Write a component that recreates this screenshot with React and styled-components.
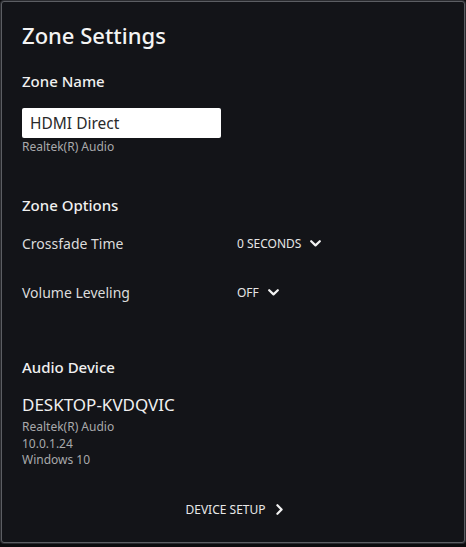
import React from "react";
import styled, { createGlobalStyle } from "styled-components";

const Global = createGlobalStyle`
  html, body { margin: 0; padding: 0; background: #0b0b0d; }
  body { font-family: "Noto Sans", "Open Sans", sans-serif; -webkit-font-smoothing: antialiased; }
  * { box-sizing: border-box; }
`;

const Backdrop = styled.div`
  width: 466px;
  height: 547px;
  padding: 1px 1px 4px 1px;
  background: #0b0b0d;
`;

const Dialog = styled.div`
  width: 464px;
  height: 542px;
  background: #131418;
  border: 1px solid #5c5e63;
  border-radius: 3px;
  box-shadow: 0 0 0 1px #2a2b2f;
  padding: 18px 20px 0 20px;
  display: flex;
  flex-direction: column;
  color: #ececec;
`;

const Title = styled.h1`
  margin: 0;
  font-size: 22px;
  line-height: 30px;
  font-weight: 500;
  color: #f4f4f4;
`;

const SectionTitle = styled.h2`
  margin: ${(p) => p.$top}px 0 0 0;
  font-size: 15px;
  line-height: 20px;
  font-weight: 500;
  color: #f0f0f0;
`;

const NameInput = styled.div`
  margin-top: 17px;
  width: 199px;
  height: 30px;
  background: #ffffff;
  border-radius: 2px;
  color: #2a2a2a;
  font-size: 15.5px;
  line-height: 30px;
  padding-left: 8px;
`;

const SubText = styled.div`
  font-size: 12px;
  line-height: ${(p) => p.$lh || 17}px;
  color: #a8a9ab;
`;

const OptionRow = styled.div`
  display: grid;
  grid-template-columns: 215px auto;
  align-items: center;
  margin-top: ${(p) => p.$top}px;
  height: 20px;
`;

const OptionLabel = styled.span`
  font-size: 14px;
  color: #dcdcdc;
`;

const OptionValue = styled.span`
  display: inline-flex;
  align-items: center;
  gap: 9px;
  font-size: 12px;
  color: #e6e6e6;
`;

const DeviceName = styled.div`
  margin-top: 16px;
  margin-bottom: 2px;
  font-size: 17px;
  line-height: 24px;
  color: #f0f0f0;
`;

const SetupButton = styled.div`
  margin-top: 33px;
  align-self: center;
  display: inline-flex;
  align-items: center;
  gap: 10px;
  font-size: 12px;
  line-height: 16px;
  color: #e8e8e8;
  padding-left: 2px;
`;

const ChevronDown = () => (
  <svg width="11" height="7" viewBox="0 0 11 7" fill="none">
    <path d="M1.2 1.2 L5.5 5.4 L9.8 1.2" stroke="#f2f2f2" strokeWidth="2.2" strokeLinecap="round" strokeLinejoin="round" />
  </svg>
);

const ChevronRight = () => (
  <svg width="7" height="11" viewBox="0 0 7 11" fill="none">
    <path d="M1.4 1.2 L5.6 5.5 L1.4 9.8" stroke="#f2f2f2" strokeWidth="2.2" strokeLinecap="round" strokeLinejoin="round" />
  </svg>
);

export default function App() {
  return (
    <>
      <Global />
      <Backdrop>
        <Dialog>
          <Title>Zone Settings</Title>
          <SectionTitle $top={21}>Zone Name</SectionTitle>
          <NameInput>HDMI Direct</NameInput>
          <SubText>Realtek(R) Audio</SubText>

          <SectionTitle $top={40}>Zone Options</SectionTitle>
          <OptionRow $top={18}>
            <OptionLabel>Crossfade Time</OptionLabel>
            <OptionValue>0 SECONDS <ChevronDown /></OptionValue>
          </OptionRow>
          <OptionRow $top={29}>
            <OptionLabel>Volume Leveling</OptionLabel>
            <OptionValue>OFF <ChevronDown /></OptionValue>
          </OptionRow>

          <SectionTitle $top={55}>Audio Device</SectionTitle>
          <DeviceName>DESKTOP-KVDQVIC</DeviceName>
          <SubText $lh={16.5}>Realtek(R) Audio</SubText>
          <SubText $lh={16.5}>10.0.1.24</SubText>
          <SubText $lh={16.5}>Windows 10</SubText>

          <SetupButton>DEVICE SETUP <ChevronRight /></SetupButton>
        </Dialog>
      </Backdrop>
    </>
  );
}
